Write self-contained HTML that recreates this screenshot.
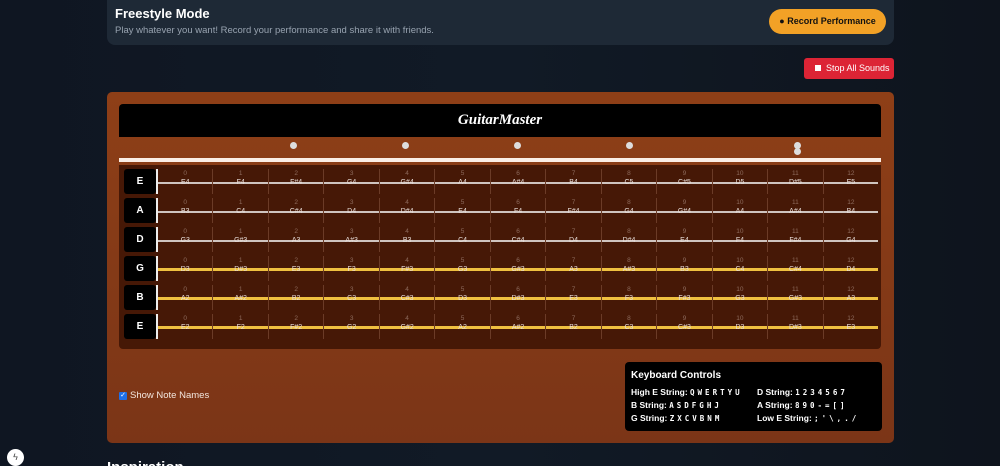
<!DOCTYPE html>
<html><head><meta charset="utf-8"><style>
*{box-sizing:border-box;margin:0;padding:0}
html,body{width:1000px;height:466px;overflow:hidden}
body{background:linear-gradient(90deg,#0f1622,#111a26 50%,#0e141d);font-family:"Liberation Sans",sans-serif;position:relative;color:#fff}
.abs{position:absolute}
.hdr{left:107px;top:-10px;width:787px;height:55px;background:#1e2936;border-radius:8px}
.hdr h1{position:absolute;left:8px;top:16px;font-size:13px;font-weight:bold;color:#fff}
.hdr p{position:absolute;left:8px;top:35px;font-size:9.5px;color:#98a3b0}
.rec{left:769px;top:9px;width:117px;height:25px;background:#f2a126;border-radius:13px;color:#111;font-size:9px;font-weight:bold;line-height:25px;text-align:center;white-space:nowrap}
.stop{left:804px;top:58px;width:90px;height:21px;background:#dc2435;border-radius:3px;font-size:9px;line-height:21px;color:#fff;padding-left:22px;white-space:nowrap}
.stop:before{content:"";position:absolute;left:11px;top:7px;width:6px;height:6px;background:#fff}
.body{left:107px;top:92px;width:787px;height:351px;background:linear-gradient(180deg,#8e3f17,#7b3517);border-radius:5px}
.title{left:119px;top:104px;width:762px;height:33px;background:#000;border-radius:4px 4px 0 0;text-align:center;font:italic bold 15px "Liberation Serif",serif;line-height:33px}
.dot{width:7px;height:7px;border-radius:50%;background:#ddd}
.nut{left:119px;top:158px;width:762px;height:4px;background:#fbeee6}
.fb{left:119px;top:165px;width:762px;height:184px;background:#461806;border-radius:0 0 4px 4px}
.row{position:absolute;left:124px;height:25px;width:754px}
.lab{position:absolute;left:0;top:0;width:32px;height:25px;background:#000;border-radius:3px;font-size:10px;font-weight:bold;text-align:center;line-height:25px}
.nl{position:absolute;left:32px;top:0;width:2px;height:25px;background:#eee}
.str{position:absolute;left:34px;top:13px;width:720px;height:1.5px;background:#cfc4bf}
.y .str{height:3px;top:12px;background:#efc040}
.cells{position:absolute;left:34px;top:0;width:720px;height:25px;display:flex}
.cells div{flex:1;border-right:1px solid #6b3b27;text-align:center;font-size:6.5px;line-height:8px;padding-top:1px;color:#8d6a5c}
.cells div:last-child{border-right:none}
.cells b{display:block;font-weight:normal;color:#e8ddd8;font-size:7px;margin-top:1px}
.chk{left:119px;top:392px;width:8px;height:8px;background:#1f6fe8;border-radius:1px;color:#fff;font-size:7px;line-height:8px;text-align:center}
.kb{left:625px;top:362px;width:257px;height:69px;background:#000;border-radius:4px;padding:8px 6px;font-size:8.5px;font-weight:bold}
.kb h3{font-size:10px;margin-bottom:6px}
.kb .g{display:grid;grid-template-columns:126px 120px;row-gap:3px}
.kb span{font-family:"DejaVu Sans Mono",monospace;font-size:7.5px;letter-spacing:3px}
</style></head><body>
<div class="abs hdr"><h1>Freestyle Mode</h1><p>Play whatever you want! Record your performance and share it with friends.</p></div>
<div class="abs rec">● Record Performance</div>
<div class="abs stop">Stop All Sounds</div>
<div class="abs body"></div>
<div class="abs title">GuitarMaster</div>
<div class="abs dot" style="left:290px;top:142px"></div>
<div class="abs dot" style="left:402px;top:142px"></div>
<div class="abs dot" style="left:514px;top:142px"></div>
<div class="abs dot" style="left:626px;top:142px"></div>
<div class="abs dot" style="left:794px;top:142px"></div>
<div class="abs dot" style="left:794px;top:148px"></div>
<div class="abs nut"></div>
<div class="abs fb"></div>

<div class="row" style="top:169px"><div class="str"></div><div class="lab">E</div><div class="nl"></div><div class="cells"><div>0<b>E4</b></div><div>1<b>F4</b></div><div>2<b>F#4</b></div><div>3<b>G4</b></div><div>4<b>G#4</b></div><div>5<b>A4</b></div><div>6<b>A#4</b></div><div>7<b>B4</b></div><div>8<b>C5</b></div><div>9<b>C#5</b></div><div>10<b>D5</b></div><div>11<b>D#5</b></div><div>12<b>E5</b></div></div></div>
<div class="row" style="top:198px"><div class="str"></div><div class="lab">A</div><div class="nl"></div><div class="cells"><div>0<b>B3</b></div><div>1<b>C4</b></div><div>2<b>C#4</b></div><div>3<b>D4</b></div><div>4<b>D#4</b></div><div>5<b>E4</b></div><div>6<b>F4</b></div><div>7<b>F#4</b></div><div>8<b>G4</b></div><div>9<b>G#4</b></div><div>10<b>A4</b></div><div>11<b>A#4</b></div><div>12<b>B4</b></div></div></div>
<div class="row" style="top:227px"><div class="str"></div><div class="lab">D</div><div class="nl"></div><div class="cells"><div>0<b>G3</b></div><div>1<b>G#3</b></div><div>2<b>A3</b></div><div>3<b>A#3</b></div><div>4<b>B3</b></div><div>5<b>C4</b></div><div>6<b>C#4</b></div><div>7<b>D4</b></div><div>8<b>D#4</b></div><div>9<b>E4</b></div><div>10<b>F4</b></div><div>11<b>F#4</b></div><div>12<b>G4</b></div></div></div>
<div class="row y" style="top:256px"><div class="str"></div><div class="lab">G</div><div class="nl"></div><div class="cells"><div>0<b>D3</b></div><div>1<b>D#3</b></div><div>2<b>E3</b></div><div>3<b>F3</b></div><div>4<b>F#3</b></div><div>5<b>G3</b></div><div>6<b>G#3</b></div><div>7<b>A3</b></div><div>8<b>A#3</b></div><div>9<b>B3</b></div><div>10<b>C4</b></div><div>11<b>C#4</b></div><div>12<b>D4</b></div></div></div>
<div class="row y" style="top:285px"><div class="str"></div><div class="lab">B</div><div class="nl"></div><div class="cells"><div>0<b>A2</b></div><div>1<b>A#2</b></div><div>2<b>B2</b></div><div>3<b>C3</b></div><div>4<b>C#3</b></div><div>5<b>D3</b></div><div>6<b>D#3</b></div><div>7<b>E3</b></div><div>8<b>F3</b></div><div>9<b>F#3</b></div><div>10<b>G3</b></div><div>11<b>G#3</b></div><div>12<b>A3</b></div></div></div>
<div class="row y" style="top:314px"><div class="str"></div><div class="lab">E</div><div class="nl"></div><div class="cells"><div>0<b>E2</b></div><div>1<b>F2</b></div><div>2<b>F#2</b></div><div>3<b>G2</b></div><div>4<b>G#2</b></div><div>5<b>A2</b></div><div>6<b>A#2</b></div><div>7<b>B2</b></div><div>8<b>C3</b></div><div>9<b>C#3</b></div><div>10<b>D3</b></div><div>11<b>D#3</b></div><div>12<b>E3</b></div></div></div>

<div class="abs chk">✓</div>
<div class="abs" style="left:130px;top:390px;font-size:9.5px;color:#f3e6de">Show Note Names</div>
<div class="abs kb"><h3>Keyboard Controls</h3><div class="g">
<div>High E String: <span>QWERTYU</span></div><div>D String: <span>1234567</span></div>
<div>B String: <span>ASDFGHJ</span></div><div>A String: <span>890-=[]</span></div>
<div>G String: <span>ZXCVBNM</span></div><div>Low E String: <span>;'\,./</span></div></div></div>
<div class="abs" style="left:107px;top:459px;font-size:15px;font-weight:bold">Inspiration</div>
<div class="abs" style="left:7px;top:449px;width:17px;height:17px;border-radius:50%;background:#fff;color:#444;font-size:9px;text-align:center;line-height:17px">ϟ</div>
</body></html>
